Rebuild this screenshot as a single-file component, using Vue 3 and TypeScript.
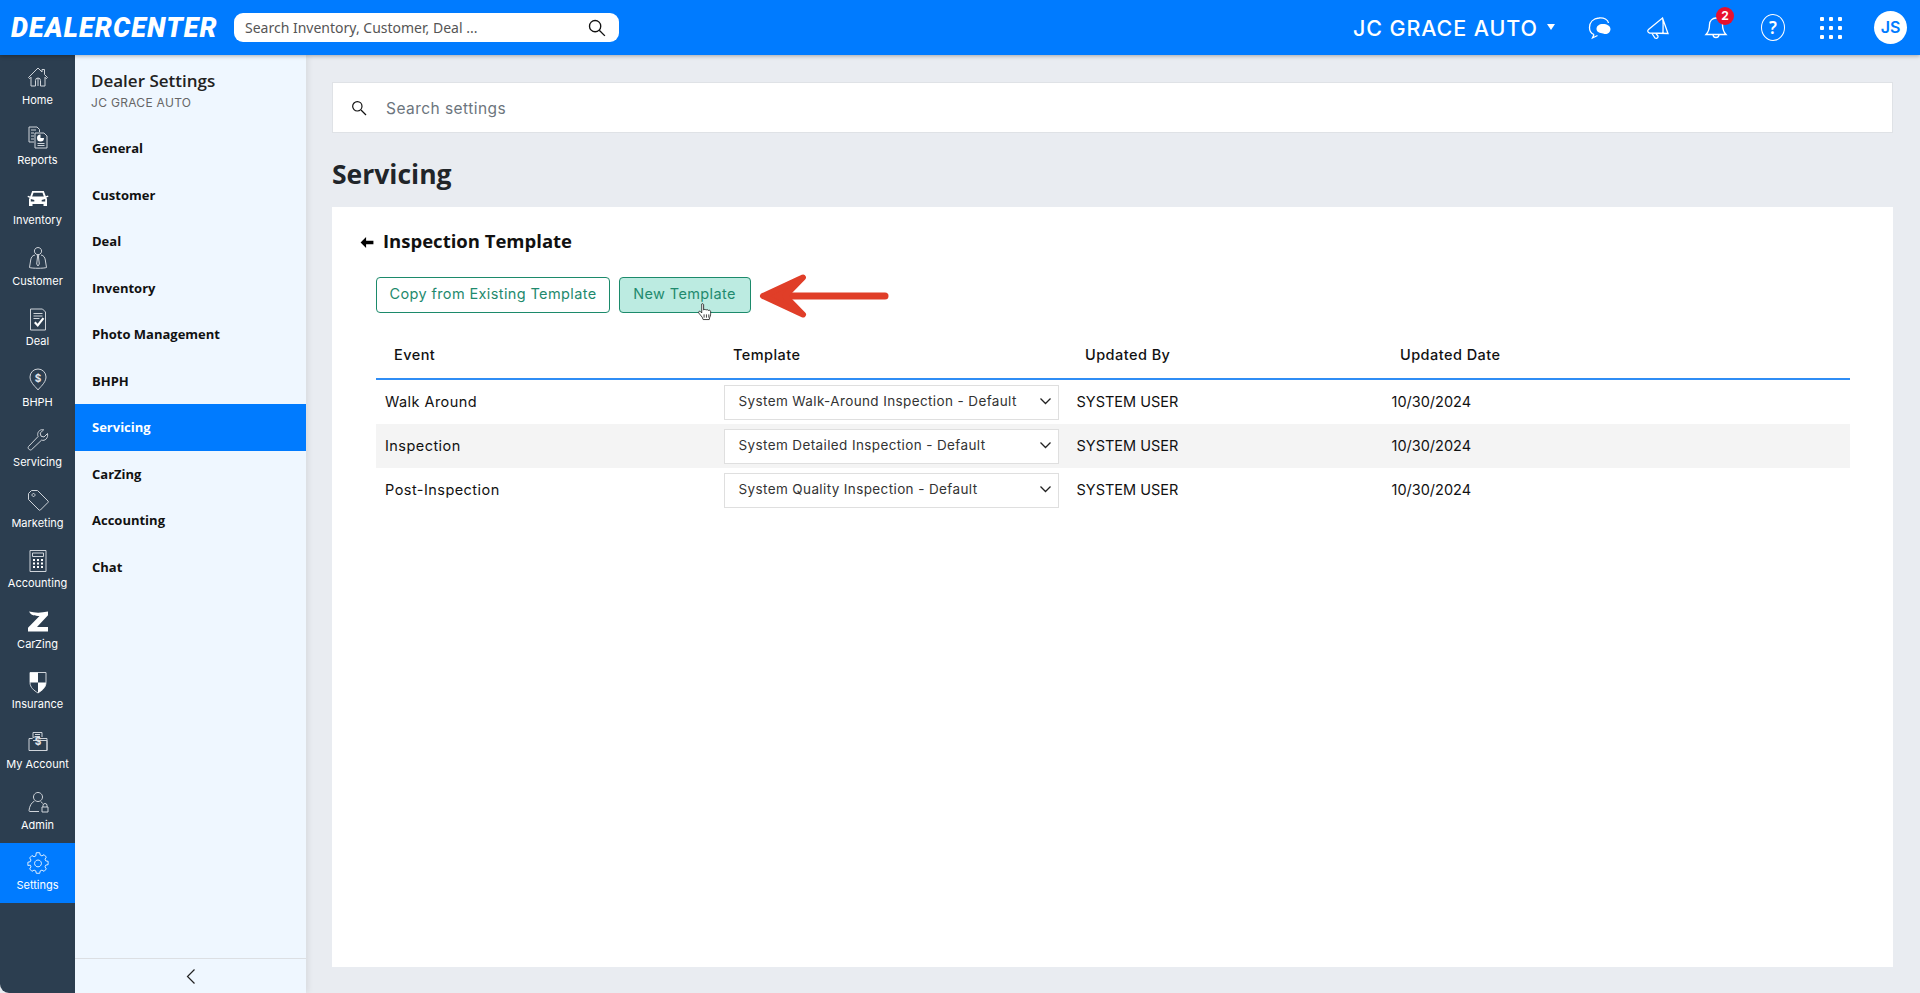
<script setup lang="ts">
interface RailItem { label: string; active?: boolean; strokes?: string[]; fills?: string[]; mark?: string }

const rail: RailItem[] = [
  { label: 'Home', strokes: ['M2.500 12.500 12 3l4 4V4.500h2.500V9.500l3 3-1.200 1.200L19 12.200V21h-4.500v-5.500a2.500 2.500 0 0 0-5 0V21H5v-8.800l-1.300 1.500z', 'M12 13v8'] },
  { label: 'Reports', strokes: ['M3 2h8l2.500 2.500V7M3 2v15h5', 'M5 5h5M5 8h3M5 11h3M5 14h3', 'M9 8h9l3 3v12H9z', 'M11.500 18.500h7M11.500 20.500h7'], fills: ['M14.500 9.500a3.500 3.500 0 1 0 3.500 3.500h-3.500z'] },
  { label: 'Inventory', fills: ['M6.200 5h11.600l2 5.200 2.200-.7.500 1.200-2.200.9.700 1.400V20h-3.500v-2H6.500v2H3v-6.800l.7-1.400-2.200-.9.500-1.200 2.200.7zM7.500 6.800 6.200 10.500h11.600L16.500 6.800zM4.800 13v2.500h3.500V14zM19.200 13l-3.500 1v1.500h3.500z'] },
  { label: 'Customer', strokes: ['M12 1.500a3.600 3.600 0 1 1-.01 0z', 'M9 9c-3 .6-3.800 2.500-4.300 5L3.500 21.500c2.500 1 14.500 1 17 0L19.300 14c-.5-2.500-1.300-4.400-4.300-5', 'M11.300 9h1.400l-.2 2 .8 7-1.300 2-1.300-2 .8-7z'] },
  { label: 'Deal', strokes: ['M4.500 2h12l3 3v18h-15z', 'M7.500 6.500h9M7.500 9h9M7.500 11.500h6'], fills: ['M8 16l1.600-1.500 2 2.300 5-6.300 1.700 1.300-6.500 8.300z'] },
  { label: 'BHPH', strokes: ['M12 23c-1-2-8-7-8-13a8 8 0 0 1 16 0c0 6-7 11-8 13z'], mark: '$' },
  { label: 'Servicing', strokes: ['M21.500 5.500 18 9l-3-.8L14.200 5 17.700 1.800c-3-.8-6.200 1.500-6 4.800 0 .8.200 1.400.4 1.900L2.500 18.500a2 2 0 0 0 0 2.300l.8.800a2 2 0 0 0 2.300 0l10-9.500c3.300 1.300 6.900-2.200 5.900-6.600z'] },
  { label: 'Marketing', strokes: ['M2.500 5.500 5.500 2.500h6l10.500 10.500a1 1 0 0 1 0 1.400l-7.600 7.600a1 1 0 0 1-1.400 0L2.500 11.500z', 'M7.500 5.500a1.500 1.500 0 1 0 .01 0z'] },
  { label: 'Accounting', strokes: ['M4 1.500h16v21H4z', 'M6.500 4h11v3.500h-11z'], fills: ['M7 10h2v2H7zM11 10h2v2h-2zM15 10h2v2h-2zM7 13.500h2v2H7zM11 13.500h2v2h-2zM15 13.500h2v2h-2zM7 17h2v2H7zM11 17h2v2h-2zM15 17h2v2h-2z'] },
  { label: 'CarZing', fills: ['M3 2.500c6 1.500 12 1.500 19 0v3.800L11 18h11v4.500H2v-3.800L13.500 7C9 7 5 6.500 3 2.500z'] },
  { label: 'Insurance', strokes: ['M4 2.500h16v10c0 5-4 8-8 10.500-4-2.500-8-5.500-8-10.500z'], fills: ['M4 2.500h8v10H4zM12 12.500h8c0 5-4 8-8 10.500z'] },
  { label: 'My Account', strokes: ['M7 7V2.500h9V7', 'M9 4.500h5M9 6.500h5', 'M3 8.500h3l2-1.500h5l1.500 1.500H21v12H3z', 'M7 10.500h14V20.500'], mark: '$' },
  { label: 'Admin', strokes: ['M12 2.500a4.500 4.500 0 1 1-.01 0z', 'M8.500 11c-3 1.500-5 5-5.500 9.500a1 1 0 0 0 1 1h9', 'M15 11.500l1.500 2', 'M16 17h6v5h-6z', 'M17 17v-1.500a2 2 0 0 1 4 0V17'] },
  { label: 'Settings', active: true, strokes: ['M10 2h4l.6 2.800 2 .9 2.500-1.400 2.600 2.800-1.500 2.400.8 2 2.800.6v3.800l-2.800.6-.8 2 1.500 2.400-2.600 2.800-2.500-1.400-2 .9L14 26h-4l-.6-2.800-2-.9-2.500 1.400-2.600-2.800 1.500-2.400-.8-2L.2 16.900v-3.800L3 12.500l.8-2L2.300 8.100l2.600-2.800 2.500 1.400 2-.9z', 'M12 10.500a4 4 0 1 1-.01 0z'] },
]

const nav = ['General', 'Customer', 'Deal', 'Inventory', 'Photo Management', 'BHPH', 'Servicing', 'CarZing', 'Accounting', 'Chat']

const rows = [
  { event: 'Walk Around', template: 'System Walk-Around Inspection - Default' },
  { event: 'Inspection', template: 'System Detailed Inspection - Default' },
  { event: 'Post-Inspection', template: 'System Quality Inspection - Default' },
]
</script>

<template>
  <div class="app">
    <header class="topbar">
      <div class="logo">DEALERCENTER</div>
      <div class="global-search">
        <span>Search Inventory, Customer, Deal ...</span>
        <svg class="glass" viewBox="0 0 24 24"><circle cx="9.500" cy="9.500" r="7.500" /><path d="m15 15 7.500 7.500" /></svg>
      </div>
      <div class="top-right">
        <span class="dealer">JC GRACE AUTO</span>
        <span class="caret"></span>
        <svg class="top-icon chat" viewBox="0 0 24 24">
          <path d="M11 2c5-.5 9 1.500 9.500 5M6 18.500c-3-1-4.500-3.500-4.500-7C1.500 6 5.500 2.500 11 2M6 18.500l-1.500 3.500 5-2.500" />
          <path class="solid" d="M15 8c4 0 7.500 2 7.500 5s-2.500 5-5 5c-.5 0-1.500 0-2.500-.5-3-.3-6.500-1.500-6.500-4.500S11 8 15 8z" />
        </svg>
        <svg class="top-icon" viewBox="0 0 24 24">
          <path d="M16.500 2 22 17.500 3.500 17c-2-.5-2.200-2.500-1-3.500zM16.500 2c1 3 .5 9 .5 15.500" />
          <path d="m6 17.500 3 4.500c1.500 1 3.500-.5 3-2l-2-2.500" />
        </svg>
        <div class="bell">
          <svg class="top-icon" viewBox="0 0 24 24">
            <path d="M12 2a6.500 6.500 0 0 1 6.500 6.500c0 5 1 7.500 3.500 10H2c2.500-2.500 3.500-5 3.500-10A6.500 6.500 0 0 1 12 2zM9 18.500a3 3 0 0 0 6 0" />
          </svg>
          <span class="badge">2</span>
        </div>
        <div class="help">?</div>
        <div class="grid-dots"><i v-for="n in 9" :key="n"></i></div>
        <div class="avatar">JS</div>
      </div>
    </header>

    <div class="body">
      <nav class="rail">
        <a v-for="item in rail" :key="item.label" class="rail-item" :class="{ on: item.active }">
          <svg class="rail-icon" :viewBox="item.label === 'Settings' ? '0 0 24 28' : '0 0 24 24'">
            <path v-for="d in item.strokes" :key="d" :d="d" class="ln" />
            <path v-for="d in item.fills" :key="d" :d="d" class="fl" />
            <text v-if="item.mark" x="12" y="14.500" class="mk" text-anchor="middle">{{ item.mark }}</text>
          </svg>
          <span>{{ item.label }}</span>
        </a>
      </nav>

      <aside class="side">
        <div class="side-head">
          <h2>Dealer Settings</h2>
          <p>JC GRACE AUTO</p>
        </div>
        <ul>
          <li v-for="n in nav" :key="n" :class="{ on: n === 'Servicing' }">{{ n }}</li>
        </ul>
        <div class="collapse">
          <svg viewBox="0 0 10 16"><path d="M8.500 1 1.500 8l7 7" /></svg>
        </div>
      </aside>

      <main class="content">
        <div class="search-card">
          <svg class="glass small" viewBox="0 0 24 24"><circle cx="9.500" cy="9.500" r="7" /><path d="m15 15 7.500 7.500" /></svg>
          <span>Search settings</span>
        </div>
        <h1>Servicing</h1>
        <section class="card">
          <div class="card-title">
            <svg viewBox="0 0 14 12"><path d="M6 0 0 6l6 6V8h8V4H6z" /></svg>
            <h3>Inspection Template</h3>
          </div>
          <div class="actions">
            <button class="btn">Copy from Existing Template</button>
            <button class="btn hover">New Template</button>
            <svg class="cursor" viewBox="0 0 18 20">
              <path d="M5 1.500c1-.8 2 0 2 1V8c.5-1 2.200-1 2.500 0 .6-.8 2.200-.7 2.500.4.800-.6 2.300-.2 2.400 1 .2 2.500 0 5-1 6.600l-.4 2H6.500l-1-2.500L1.800 11c-.6-1 .4-2.300 1.700-1.600L5 11z" />
              <path d="M7.500 12.500V16M10 12.500V16M12.500 12.500V16" />
            </svg>
            <svg class="arrow" viewBox="0 0 131 46">
              <path class="shaft" d="M127 23H30" />
              <path class="head" d="M5 23 45 4.500 27 23l18 18.500z" />
            </svg>
          </div>
          <div class="table">
            <div class="thead">
              <div class="th">Event</div>
              <div class="th">Template</div>
              <div class="th">Updated By</div>
              <div class="th">Updated Date</div>
            </div>
            <div v-for="r in rows" :key="r.event" class="tr">
              <div class="td ev">{{ r.event }}</div>
              <div class="td sel-cell">
                <div class="select">
                  <span>{{ r.template }}</span>
                  <svg viewBox="0 0 12 8"><path d="m1 1.500 5 5 5-5" /></svg>
                </div>
              </div>
              <div class="td">SYSTEM USER</div>
              <div class="td">10/30/2024</div>
            </div>
          </div>
        </section>
      </main>
    </div>
  </div>
</template>

<style>
html, body { margin: 0; height: 100%; overflow: hidden; background: #e9ecf1; }
</style>

<style scoped>
.app { height: 993px; display: flex; flex-direction: column; font-family: Inter, "Noto Sans", sans-serif; color: #111; }

.topbar { height: 55px; flex: none; background: #007bff; display: flex; align-items: center; padding-left: 11px; box-shadow: 0 1px 4px rgba(0,0,0,.3); position: relative; z-index: 3; }
.logo { width: 205px; flex: none; font: italic 900 27px Roboto, sans-serif; color: #fff; letter-spacing: 1.100px; white-space: nowrap; }
.global-search { margin-left: 18px; width: 385px; height: 29px; background: #fff; border-radius: 9px; display: flex; align-items: center; justify-content: space-between; padding: 0 13px 0 11px; box-sizing: border-box; font: 14px "Noto Sans", sans-serif; color: #555; }
.glass { width: 18px; height: 18px; fill: none; stroke: #111; stroke-width: 1.800; }
.top-right { margin-left: auto; display: flex; align-items: center; padding-right: 13px; color: #fff; }
.dealer { font: 500 21.500px Inter, sans-serif; letter-spacing: .9px; white-space: nowrap; }
.caret { width: 0; height: 0; border: 4.500px solid transparent; border-top: 6px solid #fff; margin: 2px 0 0 9px; }
.top-icon { width: 24px; height: 24px; fill: none; stroke: #fff; stroke-width: 1.300; display: block; }
.top-icon .solid { fill: #fff; stroke: none; }
.chat { margin-left: 33px; }
.chat + .top-icon { margin-left: 34px; }
.bell { margin-left: 34px; position: relative; }
.badge { position: absolute; top: -9px; left: 12px; width: 18px; height: 18px; border-radius: 50%; background: #e8112d; color: #fff; font: 700 12px/18px Inter, sans-serif; text-align: center; }
.help { margin-left: 33px; width: 22px; height: 25px; border: 1px solid #fff; border-radius: 50%; font: 600 17px/25px "Noto Sans", sans-serif; text-align: center; }
.grid-dots { margin-left: 35px; width: 22px; display: grid; grid-template-columns: repeat(3, 4px); gap: 5px; justify-content: space-between; }
.grid-dots i { width: 4px; height: 4px; background: #fff; border-radius: 1px; }
.avatar { margin-left: 32px; width: 33px; height: 33px; border-radius: 50%; background: #fff; color: #007bff; font: 600 16px/33px Inter, sans-serif; text-align: center; }

.body { flex: 1; display: flex; min-height: 0; }

.rail { width: 75px; flex: none; background: #2c3e50; padding-top: 2px; border-bottom-left-radius: 9px; box-sizing: border-box; }
.rail-item { height: 60.460px; display: flex; flex-direction: column; align-items: center; color: #fff; padding-top: 8px; box-sizing: border-box; font: 11px/14px Inter, sans-serif; }
.rail-item span { margin-top: 3.500px; white-space: nowrap; }
.rail-item.on { background: #007bff; }
.rail-icon { width: 24px; height: 24px; display: block; }
.rail-icon .ln { fill: none; stroke: #cfd4da; stroke-width: 1; }
.rail-icon .fl { fill: #fff; }
.rail-icon .mk { fill: #e4e7ea; font: 700 10px Inter, sans-serif; }
.rail-item.on .ln { stroke: #fff; }

.side { width: 231px; flex: none; background: #eff7ff; display: flex; flex-direction: column; box-shadow: 2px 0 6px rgba(0,0,0,.08); position: relative; z-index: 2; }
.side-head { padding: 16px 16px 0; height: 70px; box-sizing: border-box; }
.side-head h2 { margin: 0; font: 600 17px/20px "Open Sans", sans-serif; color: #222; }
.side-head p { margin: 4px 0 0; font: 400 12px/15px Inter, sans-serif; color: #666; letter-spacing: .3px; }
.side ul { list-style: none; margin: 0; padding: 0; flex: 1; }
.side li { height: 46.500px; padding-left: 17px; font: 700 13px/46.500px "Open Sans", sans-serif; color: #111; }
.side li.on { background: #007bff; color: #fff; }
.collapse { height: 34px; border-top: 1px solid #dcdfe3; display: flex; align-items: center; justify-content: center; flex: none; }
.collapse svg { width: 10px; height: 17px; fill: none; stroke: #222; stroke-width: 1.200; }

.content { flex: 1; min-width: 0; padding: 27px 27px 26px 26px; display: flex; flex-direction: column; box-sizing: border-box; }
.search-card { height: 51px; flex: none; background: #fff; border: 1px solid #dfe2e6; box-sizing: border-box; display: flex; align-items: center; padding: 2px 0 0 18px; font: 400 15.500px Inter, sans-serif; letter-spacing: .45px; color: #6c757d; }
.glass.small { width: 16px; height: 16px; margin: -2px 19px 0 0; }
h1 { margin: 0; height: 74px; flex: none; font: 700 26.500px/82px "Open Sans", sans-serif; color: #212529; }
.card { flex: 1; background: #fff; padding: 21px 43px 0 44px; min-height: 0; }
.card-title { display: flex; align-items: center; height: 28px; margin-left: -15px; }
.card-title svg { width: 14px; height: 11px; fill: #000; margin: 0 9px 0 -1px; }
.card-title h3 { margin: 0 0 2px; font: 700 18.500px/28px "Open Sans", sans-serif; color: #111; }
.actions { display: flex; gap: 8.500px; margin-top: 21px; position: relative; height: 36px; }
.btn { height: 36px; padding: 0 0 3px; border: 1px solid #1c8a6b; border-radius: 4px; background: #fff; color: #1f8a6e; font: 400 14.500px Inter, sans-serif; letter-spacing: .38px; white-space: nowrap; box-sizing: border-box; width: 234px; }
.btn.hover { width: 132px; background: #bcebe1; }
.cursor { position: absolute; left: 321px; top: 25px; width: 17px; height: 20px; fill: #fff; stroke: #222; stroke-width: .9; }
.arrow { position: absolute; left: 382px; top: -4px; width: 131px; height: 46px; fill: #e03e28; stroke: #e03e28; stroke-linecap: round; stroke-linejoin: round; }
.arrow .shaft { stroke-width: 7; fill: none; }
.arrow .head { stroke-width: 6; }
.table { margin-top: 20px; }
.thead, .tr { display: grid; grid-template-columns: 339px 352px 315px 1fr; }
.thead { border-bottom: 2px solid #2f8df5; align-items: center; padding-bottom: 2px; height: 43px; }
.th { padding-left: 18px; font: 500 14.500px Inter, sans-serif; letter-spacing: .45px; color: #111; }
.tr { height: 44px; align-items: center; }
.tr:nth-child(3) { background: #f4f4f4; }
.td { padding: 0 0 2px 9.500px; font: 400 14.500px Inter, sans-serif; color: #111; }
.td.ev { padding-left: 9px; letter-spacing: .45px; }
.sel-cell { padding: 0 0 0 9px; }
.select { width: 335px; height: 35px; background: #fff; border: 1px solid #dfdfdf; box-sizing: border-box; display: flex; align-items: center; justify-content: space-between; padding: 0 6px 3px 13.500px; font: 400 13.500px Inter, sans-serif; letter-spacing: .38px; color: #333; white-space: nowrap; }
.select svg { width: 13px; height: 8px; fill: none; stroke: #222; stroke-width: 1.300; }
</style>
